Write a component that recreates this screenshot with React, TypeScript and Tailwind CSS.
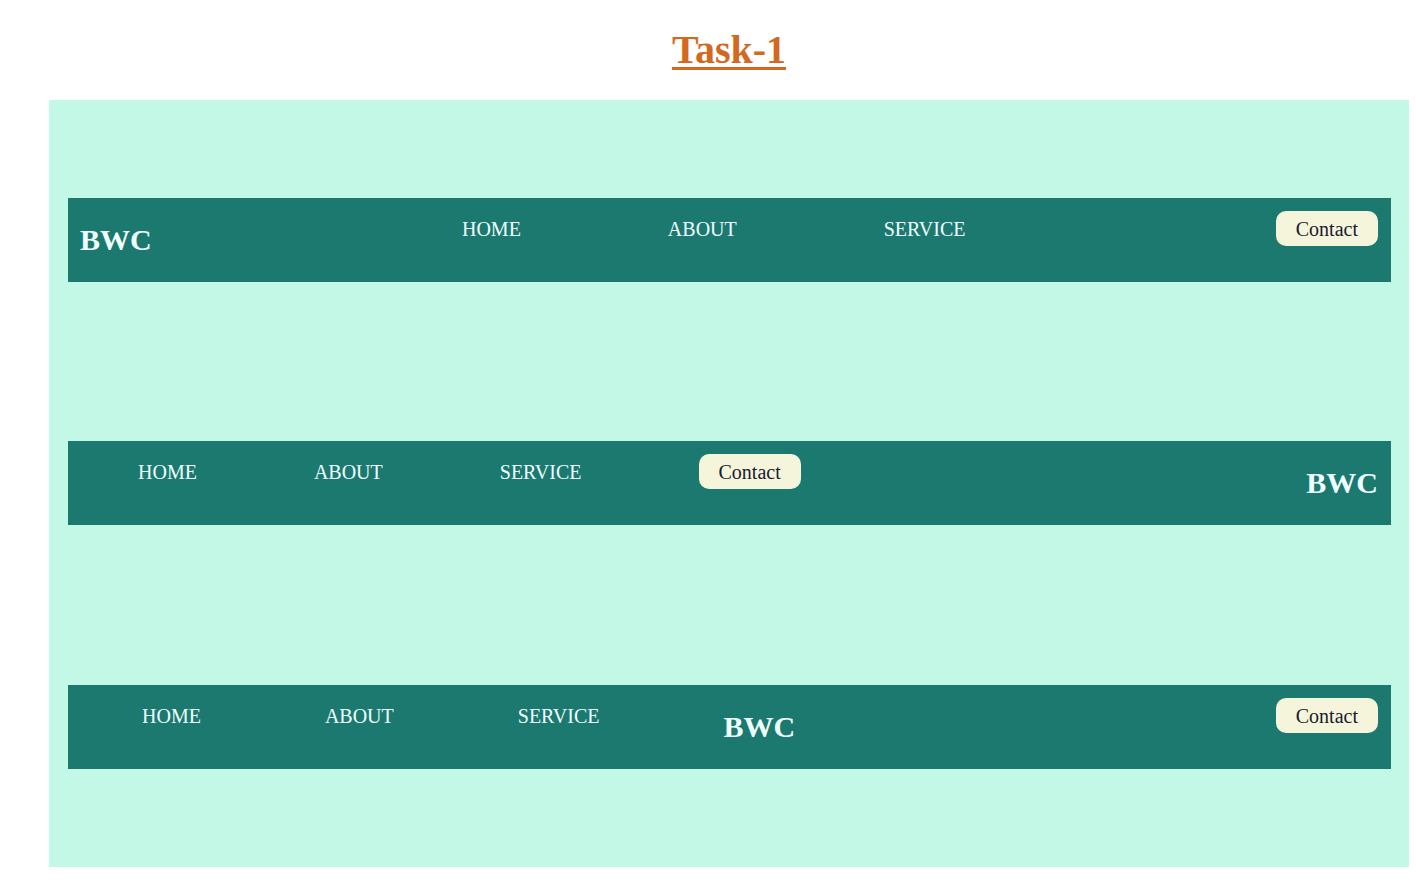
import React from "react";

const links = ["HOME", "ABOUT", "SERVICE"];

const Logo: React.FC = () => (
  <h2 className="my-[25px] text-[30px] font-bold leading-[34px] text-[#f0ffff]">
    BWC
  </h2>
);

const ContactButton: React.FC = () => (
  <button className="mt-[13px] rounded-[10px] bg-[#f5f5dc] px-5 pt-[7px] pb-[5px] text-[20px] leading-[23px] text-[#1a1a2e]">
    Contact
  </button>
);

const NavLink: React.FC<{ label: string }> = ({ label }) => (
  <li className="mt-[20px] text-[20px] leading-[23px] text-[#f0ffff]">
    {label}
  </li>
);

const App: React.FC = () => {
  return (
    <div
      className="min-h-[890px] bg-white"
      style={{ fontFamily: '"Liberation Serif", "Times New Roman", serif' }}
    >
      <div className="ml-[49px] w-[1360px]">
        <h1 className="mt-[27px] mb-[27px] text-center text-[40px] font-bold leading-[46px] text-[#d2691e] underline decoration-[3px] underline-offset-[4px]">
          Task-1
        </h1>

        <div className="flex flex-col bg-[#c3f7e6] pl-[19px] pr-[18px] pt-[98px] pb-[98px]">
          {/* logo left, links middle, contact right */}
          <nav className="flex h-[84px] items-start justify-between bg-[#1c7970] pl-3 pr-[13px]">
            <Logo />
            <ul className="flex gap-[147px]">
              {links.map((l) => (
                <NavLink key={l} label={l} />
              ))}
            </ul>
            <ContactButton />
          </nav>

          {/* links + contact left, logo right */}
          <nav className="mt-[159px] flex h-[84px] items-start justify-between bg-[#1c7970] pl-[70px] pr-[13px]">
            <ul className="flex items-start gap-[117px]">
              {links.map((l) => (
                <NavLink key={l} label={l} />
              ))}
              <li>
                <ContactButton />
              </li>
            </ul>
            <Logo />
          </nav>

          {/* links + logo left, contact right */}
          <nav className="mt-[160px] flex h-[84px] items-start justify-between bg-[#1c7970] pl-[74px] pr-[13px]">
            <ul className="flex items-start gap-[124px]">
              {links.map((l) => (
                <NavLink key={l} label={l} />
              ))}
              <li>
                <Logo />
              </li>
            </ul>
            <ContactButton />
          </nav>
        </div>
      </div>
    </div>
  );
};

export default App;
